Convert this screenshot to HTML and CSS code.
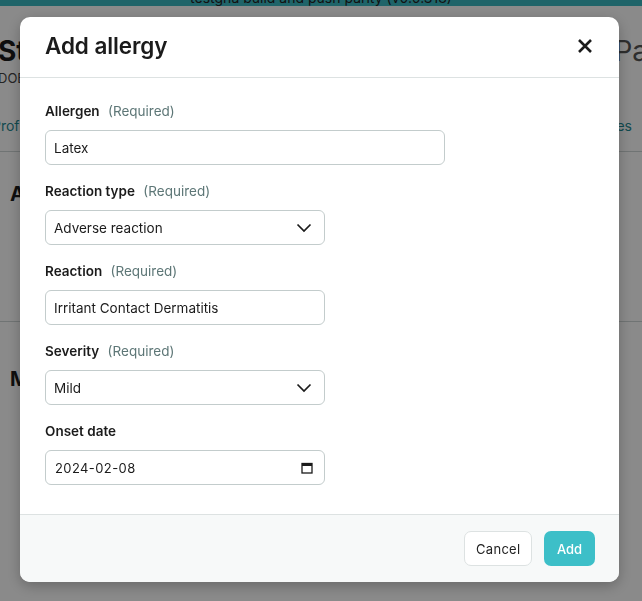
FILE: index.html
```html
<!DOCTYPE html>
<html lang="en">
<head>
    <meta charset="UTF-8">
    <meta name="viewport" content="width=device-width, initial-scale=1.0">
    <title>Add allergy</title>
    <link rel="stylesheet" href="styles.css">
</head>
<body>
    <div class="banner"><span>testgha build and push parity (v0.0.318)</span></div>
    <div class="page">
        <div class="page-head">
            <div>
                <h1 class="patient-name">Stan</h1>
                <p class="patient-meta">DOB</p>
            </div>
            <div class="page-side">Pa</div>
        </div>
        <div class="tabs">
            <span>Profile</span>
            <span>Notes</span>
        </div>
        <div class="section first">
            <h2>Allergies</h2>
        </div>
        <div class="section last">
            <h2>Medications</h2>
        </div>
    </div>

    <div class="overlay">
        <div class="modal">
            <div class="modal-header">
                <h2>Add allergy</h2>
                <button class="close-btn" aria-label="Close">
                    <svg width="16" height="16" viewBox="0 0 16 16">
                        <path d="M2 2 L14 14 M14 2 L2 14" stroke="#1b1b1b" stroke-width="2.6" stroke-linecap="butt"/>
                    </svg>
                </button>
            </div>
            <div class="modal-body">
                <div class="field">
                    <label>Allergen <span class="req">(Required)</span></label>
                    <input class="control wide" type="text" value="Latex">
                </div>
                <div class="field">
                    <label>Reaction type <span class="req">(Required)</span></label>
                    <div class="select-wrap">
                        <select class="control">
                            <option>Adverse reaction</option>
                        </select>
                        <svg class="chevron" width="16" height="10" viewBox="0 0 16 10">
                            <path d="M1.5 1.5 L8 8 L14.5 1.5" fill="none" stroke="#1b1b1b" stroke-width="1.7"/>
                        </svg>
                    </div>
                </div>
                <div class="field">
                    <label>Reaction <span class="req">(Required)</span></label>
                    <input class="control" type="text" value="Irritant Contact Dermatitis">
                </div>
                <div class="field">
                    <label>Severity <span class="req">(Required)</span></label>
                    <div class="select-wrap">
                        <select class="control">
                            <option>Mild</option>
                        </select>
                        <svg class="chevron" width="16" height="10" viewBox="0 0 16 10">
                            <path d="M1.5 1.5 L8 8 L14.5 1.5" fill="none" stroke="#1b1b1b" stroke-width="1.7"/>
                        </svg>
                    </div>
                </div>
                <div class="field">
                    <label>Onset date</label>
                    <div class="select-wrap">
                        <input class="control date" type="text" value="2024-02-08">
                        <svg class="calendar" width="12" height="12" viewBox="0 0 12 12">
                            <rect x="1" y="1.5" width="10" height="9.5" fill="none" stroke="#1b1b1b" stroke-width="1.3"/>
                            <rect x="1" y="1.5" width="10" height="2.5" fill="#1b1b1b"/>
                        </svg>
                    </div>
                </div>
            </div>
            <div class="modal-footer">
                <button class="btn btn-cancel">Cancel</button>
                <button class="btn btn-add">Add</button>
            </div>
        </div>
    </div>
</body>
</html>
```

FILE: styles.css
```css
body {
    margin: 0;
    font-family: 'Inter', 'Noto Sans', Arial, sans-serif;
    background-color: #fff;
    color: #1b1b1b;
    overflow: hidden;
}
.banner {
    height: 6px;
    overflow: hidden;
    background-color: #3ab9c2;
    text-align: center;
    font-size: 14px;
    line-height: 14px;
}
.banner span {
    display: block;
    margin-top: -9px;
    color: #222;
}
.page-head {
    display: flex;
    justify-content: space-between;
    padding: 28px 0 0 0;
}
.patient-name {
    margin: 0 0 0 -2px;
    font-size: 28px;
    font-weight: 700;
    line-height: 34px;
}
.patient-meta {
    margin: 2px 0 0 -2px;
    font-size: 13px;
    color: #444;
}
.page-side {
    font-size: 28px;
    line-height: 34px;
    color: #555;
    margin-right: -6px;
}
.tabs {
    display: flex;
    justify-content: space-between;
    padding: 31px 10px 17px 0;
    font-size: 14px;
    color: #1f8a93;
    border-bottom: 1px solid #cfd6d6;
    margin-left: -8px;
}
.section {
    box-sizing: border-box;
    height: 170px;
    border-bottom: 1px solid #cfd6d6;
    padding: 45px 10px 0 10px;
}
.section.first {
    padding-top: 30px;
}
.section.last {
    border-bottom: none;
}
.section h2 {
    margin: 0;
    font-size: 20px;
    font-weight: 700;
    line-height: 24px;
}
.overlay {
    position: fixed;
    inset: 0;
    background: rgba(0, 0, 0, 0.46);
}
.modal {
    position: absolute;
    left: 20px;
    top: 17px;
    width: 599px;
    height: 565px;
    background: #fff;
    border-radius: 10px;
    box-shadow: 0 4px 14px rgba(0, 0, 0, 0.25);
    display: flex;
    flex-direction: column;
    overflow: hidden;
}
.modal-header {
    height: 61px;
    box-sizing: border-box;
    border-bottom: 1px solid #dde2e2;
    display: flex;
    align-items: center;
    justify-content: space-between;
    padding: 0 26px 0 25px;
}
.modal-header h2 {
    margin: 0;
    font-size: 22.5px;
    font-weight: 600;
    letter-spacing: -0.1px;
    padding-bottom: 3px;
}
.close-btn {
    border: none;
    background: none;
    padding: 0;
    width: 16px;
    height: 16px;
    margin-bottom: 3px;
}
.modal-body {
    flex: 1;
    padding: 23px 25px 0 25px;
    display: flex;
    flex-direction: column;
    gap: 16px;
}
.field {
    display: flex;
    flex-direction: column;
    gap: 9px;
}
.field label {
    font-size: 13.5px;
    font-weight: 600;
    line-height: 20px;
    color: #1b1b1b;
}
.req {
    font-weight: 400;
    color: #5d7676;
    margin-left: 5px;
}
.select-wrap {
    position: relative;
    width: 280px;
}
.control {
    box-sizing: border-box;
    width: 280px;
    height: 35px;
    border: 1px solid #c3cccc;
    border-radius: 6px;
    background: #fff;
    padding: 0 8px;
    font-family: inherit;
    font-size: 13.5px;
    color: #1b1b1b;
    appearance: none;
    -webkit-appearance: none;
    outline: none;
}
.control.wide {
    width: 400px;
}
.chevron {
    position: absolute;
    right: 13px;
    top: 13px;
    pointer-events: none;
}
.calendar {
    position: absolute;
    right: 12px;
    top: 12px;
}
.date {
    font-size: 13px;
    letter-spacing: 0.4px;
    padding-left: 9px;
}
.modal-footer {
    height: 68px;
    box-sizing: border-box;
    border-top: 1px solid #dde2e2;
    background: #f7f9f9;
    display: flex;
    align-items: center;
    justify-content: flex-end;
    gap: 12px;
    padding: 0 24px 0 0;
}
.btn {
    height: 35px;
    border-radius: 7px;
    font-family: inherit;
    font-size: 13px;
    padding: 0 11px;
    cursor: pointer;
}
.btn-cancel {
    background: #fff;
    border: 1px solid #dde2e2;
    color: #222;
    width: 68px;
    letter-spacing: 0.3px;
}
.btn-add {
    background: #3dbfc8;
    border: none;
    color: #fff;
    font-weight: 500;
    width: 51px;
}
```
